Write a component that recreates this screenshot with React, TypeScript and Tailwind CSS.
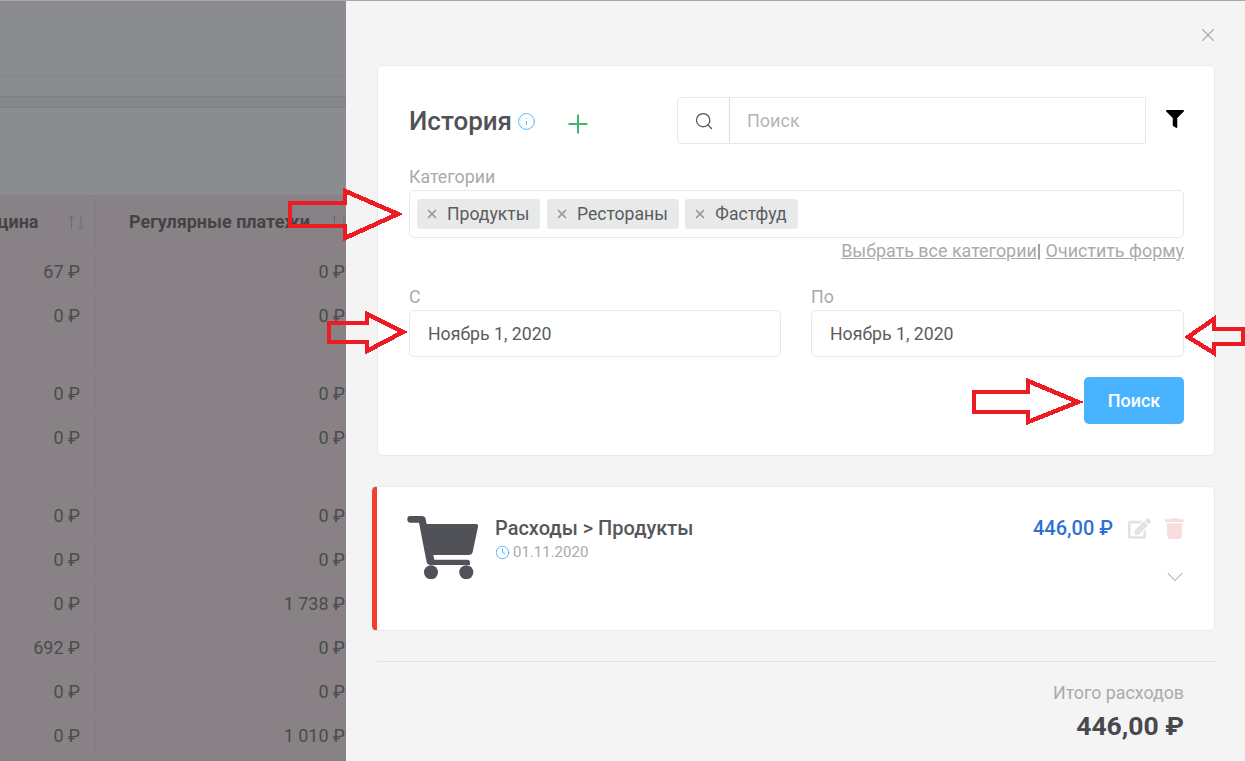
import React from "react";
import { Clock, Info, Plus, Search, X, ChevronDown } from "lucide-react";
import { FaEdit, FaTrash, FaFilter } from "react-icons/fa";

// rows behind the overlay
const rows = [
  { a: "67 ₽", b: "0 ₽", h: "h-[44px]" },
  { a: "0 ₽", b: "0 ₽", h: "h-[78px]" },
  { a: "0 ₽", b: "0 ₽", h: "h-[44px]" },
  { a: "0 ₽", b: "0 ₽", h: "h-[78px]" },
  { a: "0 ₽", b: "0 ₽", h: "h-[44px]" },
  { a: "0 ₽", b: "0 ₽", h: "h-[44px]" },
  { a: "0 ₽", b: "1 738 ₽", h: "h-[44px]" },
  { a: "692 ₽", b: "0 ₽", h: "h-[44px]" },
  { a: "0 ₽", b: "0 ₽", h: "h-[44px]" },
  { a: "0 ₽", b: "1 010 ₽", h: "h-[44px]" },
];

const SortIcon = () => (
  <svg width="16" height="16" viewBox="0 0 16 16" fill="none" stroke="#6f6c6f" strokeWidth="1" className="shrink-0">
    <path d="M3.5 15V2M0.8 5L3.5 2L6.2 5" />
    <path d="M13 2V15M10.3 12L13 15L15.7 12" />
  </svg>
);

const Chip = ({ label }: { label: string }) => (
  <div className="flex items-center h-[30px] pl-[8px] pr-[11px] rounded-[3px] bg-[#e8e9e9] text-[17.6px] text-[#5a5c60]">
    <X size={14} strokeWidth={3} className="text-[#999] mr-[8px]" />
    {label}
  </div>
);

const CartIcon = () => (
  <svg viewBox="111 107 214 190" width="71.3" height="63.3" fill="#505257" className="shrink-0">
    <path d="M120 107H155Q165 107 167 116L170 131H318Q326 131 324 140L308 216Q306 224 298 224H190L193 238H292Q300 238 300 246V254H180Q172 254 170 246L147 127H120Q112 127 112 117Q112 107 120 107Z" />
    <circle cx="183" cy="276" r="21" />
    <circle cx="289" cy="276" r="21" />
  </svg>
);

const Backdrop = () => (
  <div className="w-[346px] shrink-0 overflow-hidden bg-[#8b8c90] flex flex-col">
    <div className="h-[76px] border-b border-[#85868a]" />
    <div className="h-[19px]" />
    <div className="h-[12px] bg-[#86878b] border-y border-[#7e7f83]" />
    <div className="h-[87px]" />
    <div className="bg-[#888286] flex-1 text-[#4d4a4c]">
      <div className="flex h-[54px] border-b border-[#847e82] w-[361px] text-[#454245]">
        <div className="w-[96px] shrink-0 border-r border-[#847e82] flex items-center justify-end pr-[11.5px]">
          <span className="font-bold text-[18px] mr-[29px] whitespace-nowrap">Медицина</span>
          <SortIcon />
        </div>
        <div className="flex-1 flex items-center justify-end pr-[14px]">
          <span className="font-bold text-[18px] mr-[21px] whitespace-nowrap">Регулярные платежи</span>
          <SortIcon />
        </div>
      </div>
      {rows.map((r, i) => (
        <div key={i} className={`flex w-[361px] border-b border-[#847e82] text-[18px] ${r.h}`}>
          <div className="w-[96px] shrink-0 border-r border-[#847e82] text-right pr-[15px] pt-[11px] leading-[24px]">{r.a}</div>
          <div className="flex-1 text-right pr-[16px] pt-[11px] leading-[24px]">{r.b}</div>
        </div>
      ))}
    </div>
  </div>
);

// red annotation arrows drawn on top of the screenshot
const Arrows = () => (
  <svg className="absolute left-0 top-0 pointer-events-none" width="1245" height="761" fill="none" stroke="#ed1c24" strokeWidth="4.5" shapeRendering="crispEdges">
    <path d="M290 203H345V191L398 214L345 238V226H290Z" />
    <path d="M329 323H367V314L403 332L367 351V342H329Z" />
    <path d="M1243 329H1214V319L1188 337L1214 353V344H1243Z" />
    <path d="M974 392H1028V381L1078 402L1028 422V412H974Z" />
  </svg>
);

export default function App() {
  return (
    <div className="relative w-[1245px] h-[761px] overflow-hidden font-['Roboto',sans-serif]">
      <div className="h-[1px] bg-[#a9a9a9]" />
      <div className="flex h-[760px]">
        <Backdrop />
        <div className="flex-1 bg-[#f4f4f4] pl-[31px] pr-[30px]">
          <div className="h-[64px] flex items-center justify-end -mr-[4px] pt-[4px] text-[#aaa]">
            <X size={22} strokeWidth={1.2} />
          </div>

          {/* search card */}
          <div className="h-[391px] bg-white border border-[#e9e9e9] rounded-[5px] pl-[31px] pr-[30px] pt-[31px]">
            <div className="flex h-[47px] items-center">
              <div className="w-[268px] flex items-center shrink-0">
                <h2 className="text-[26px] font-medium text-[#505257] leading-[48px]">История</h2>
                <Info size={19} strokeWidth={1.2} className="text-[#4ab3ff] ml-[5px] mt-[2px]" />
                <Plus size={30} strokeWidth={1.6} className="text-[#3cba6c] ml-[27px] mt-[6px]" />
              </div>
              <div className="w-[469px] h-[47px] flex border border-[#e8e8e8] rounded-l-[5px]">
                <div className="w-[52px] flex items-center justify-center border-r border-[#ddd] text-[#505257]">
                  <Search size={20} strokeWidth={1.5} />
                </div>
                <div className="pl-[17px] flex items-center text-[18px] text-[#b5b5b5]">Поиск</div>
              </div>
              <FaFilter size={18} className="ml-auto -mt-[3px] text-black" />
            </div>

            <div className="mt-[21px] leading-[24px] text-[17.8px] text-[#aaa]">Категории</div>
            <div className="mt-[1px] h-[48px] border border-[#e8e8e8] rounded-[5px] flex items-center gap-[6.5px] pl-[7px]">
              <Chip label="Продукты" />
              <Chip label="Рестораны" />
              <Chip label="Фастфуд" />
            </div>
            <div className="mt-[1px] text-right leading-[24px] text-[17.9px] text-[#aaa]">
              <span className="underline">Выбрать все категории</span>
              <span className="text-[#777]">|</span> <span className="underline">Очистить форму</span>
            </div>

            <div className="mt-[22px] flex justify-between">
              <div className="w-[372px]">
                <div className="leading-[24px] text-[17.8px] text-[#aaa]">С</div>
                <div className="mt-[1px] h-[47px] border border-[#e8e8e8] rounded-[5px] flex items-center pl-[18px] pt-[1px] text-[17.7px] text-[#5a5c60]">
                  Ноябрь 1, 2020
                </div>
              </div>
              <div className="w-[373px]">
                <div className="leading-[24px] text-[17.8px] text-[#aaa]">По</div>
                <div className="mt-[1px] h-[47px] border border-[#e8e8e8] rounded-[5px] flex items-center pl-[18px] pt-[1px] text-[17.7px] text-[#5a5c60]">
                  Ноябрь 1, 2020
                </div>
              </div>
            </div>

            <div className="mt-[20px] flex justify-end">
              <button className="w-[100px] h-[47px] rounded-[5px] bg-[#4ab3ff] text-white text-[18px] font-medium">Поиск</button>
            </div>
          </div>

          {/* expense item */}
          <div className="mt-[30px] -ml-[5px] h-[145px] bg-white border border-[#e9e9e9] border-l-[5px] border-l-[#f04030] rounded-[5px] flex pl-[30px] pr-[30px] pt-[29px]">
            <CartIcon />
            <div className="ml-[16.7px]">
              <div className="text-[20px] font-medium text-[#55575c] leading-[24px]">Расходы &gt; Продукты</div>
              <div className="flex items-center text-[15px] text-[#aaa] leading-[20px] mt-[2px]">
                <Clock size={15} strokeWidth={1.5} className="text-[#4ab3ff] mr-[3px]" />
                01.11.2020
              </div>
            </div>
            <div className="ml-auto flex flex-col items-end">
              <div className="flex items-center h-[24px] -mr-[1px]">
                <span className="text-[20px] font-medium text-[#2f6fd6]">446,00 ₽</span>
                <FaEdit size={23} className="ml-[15px] text-[#e2e2e2]" />
                <FaTrash size={21} className="ml-[13px] text-[#fadcdc]" />
              </div>
              <ChevronDown size={28} strokeWidth={0.9} className="mt-[23px] -mr-[5px] text-[#aaa]" />
            </div>
          </div>

          {/* total */}
          <div className="mt-[30px] border-t border-[#e0e0e0] -mr-[1px] pr-[32px] pt-[19px] text-right">
            <div className="text-[17.8px] text-[#aaa] leading-[24px]">Итого расходов</div>
            <div className="text-[26.5px] font-bold text-[#47494e] leading-[32px] mt-[5px]">446,00 ₽</div>
          </div>
        </div>
      </div>
      <Arrows />
    </div>
  );
}
